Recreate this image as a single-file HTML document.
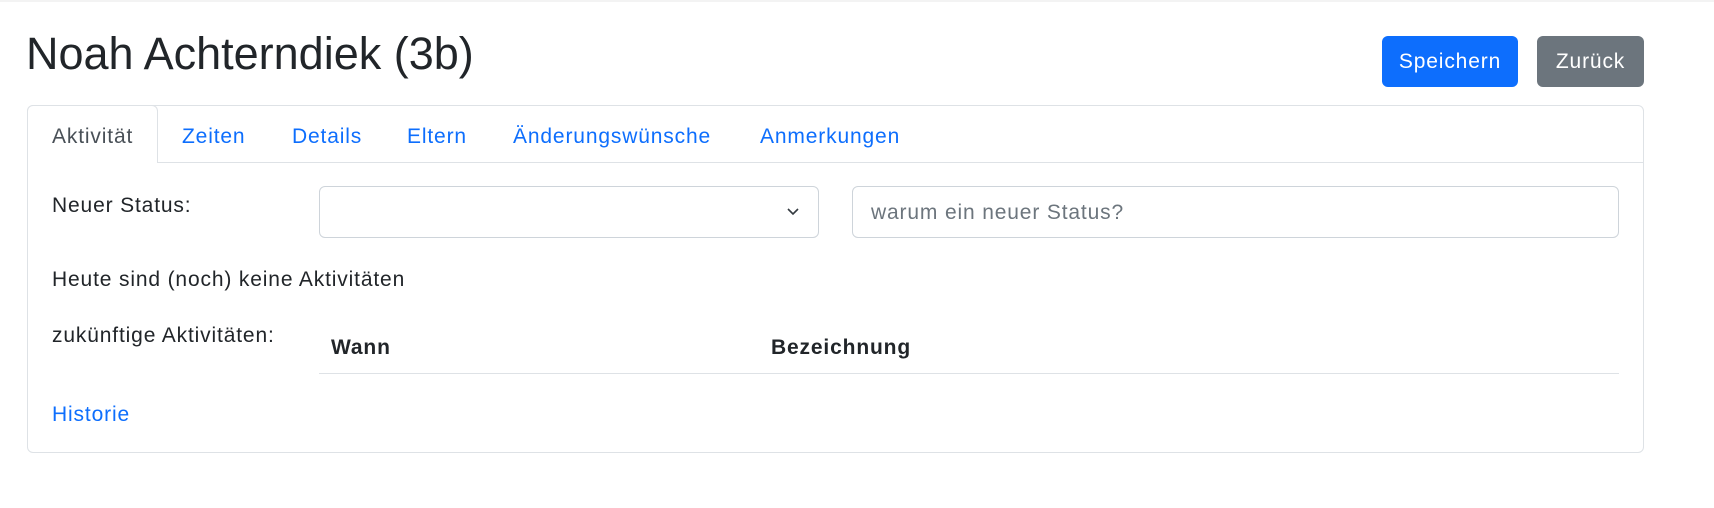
<!DOCTYPE html>
<html><head><meta charset="utf-8"><style>
*{box-sizing:border-box;margin:0;padding:0}
body{width:1714px;height:508px;background:#fff;font-family:"Liberation Sans",Arial,sans-serif;color:#212529;position:relative;overflow:hidden;font-size:21px;letter-spacing:0.85px}
.a{position:absolute;white-space:nowrap;line-height:1}
h1{position:absolute;left:26px;top:31px;font-size:45px;font-weight:400;line-height:1;color:#212529;letter-spacing:0}
.btn{position:absolute;top:36px;height:51px;border-radius:6px;color:#fff;display:flex;align-items:center;justify-content:center}
.card{position:absolute;left:27px;top:105px;width:1617px;height:348px;border:1px solid #dee2e6;border-radius:6px}
.tabline{position:absolute;left:27px;top:162px;width:1617px;height:1px;background:#dee2e6}
.active{position:absolute;left:27px;top:105px;width:131px;height:58px;border:1px solid #dee2e6;border-bottom:none;border-radius:6px 6px 0 0;background:#fff}
.link{color:#0d6efd}
.box{position:absolute;top:186px;height:52px;border:1px solid #ced4da;border-radius:6px}
</style></head><body>
<div style="position:absolute;left:0;top:0;width:1714px;height:2px;background:#f3f3f3"></div>
<h1>Noah Achterndiek (3b)</h1>
<div class="btn" style="left:1382px;width:136px;background:#0d6efd">Speichern</div>
<div class="btn" style="left:1537px;width:107px;background:#6c757d">Zurück</div>
<div class="card"></div>
<div class="tabline"></div>
<div class="active"></div>
<div class="a" style="left:52px;top:126px;color:#495057">Aktivität</div>
<div class="a link" style="left:182px;top:126px">Zeiten</div>
<div class="a link" style="left:292px;top:126px">Details</div>
<div class="a link" style="left:407px;top:126px">Eltern</div>
<div class="a link" style="left:513px;top:126px">Änderungswünsche</div>
<div class="a link" style="left:760px;top:126px">Anmerkungen</div>
<div class="a" style="left:52px;top:195px">Neuer Status:</div>
<div class="box" style="left:319px;width:500px"><svg style="position:absolute;right:18px;top:20px" width="14" height="10" viewBox="0 0 14 10"><path d="M2 2l5 5 5-5" fill="none" stroke="#343a40" stroke-width="1.6"/></svg></div>
<div class="box" style="left:852px;width:767px"></div>
<div class="a" style="left:871px;top:202px;color:#6c757d">warum ein neuer Status?</div>
<div class="a" style="left:52px;top:269px">Heute sind (noch) keine Aktivitäten</div>
<div class="a" style="left:52px;top:325px">zukünftige Aktivitäten:</div>
<div class="a" style="left:331px;top:337px;font-weight:700">Wann</div>
<div class="a" style="left:771px;top:337px;font-weight:700">Bezeichnung</div>
<div style="position:absolute;left:319px;top:373px;width:1300px;height:1px;background:#dee2e6"></div>
<div class="a link" style="left:52px;top:404px">Historie</div>
</body></html>
